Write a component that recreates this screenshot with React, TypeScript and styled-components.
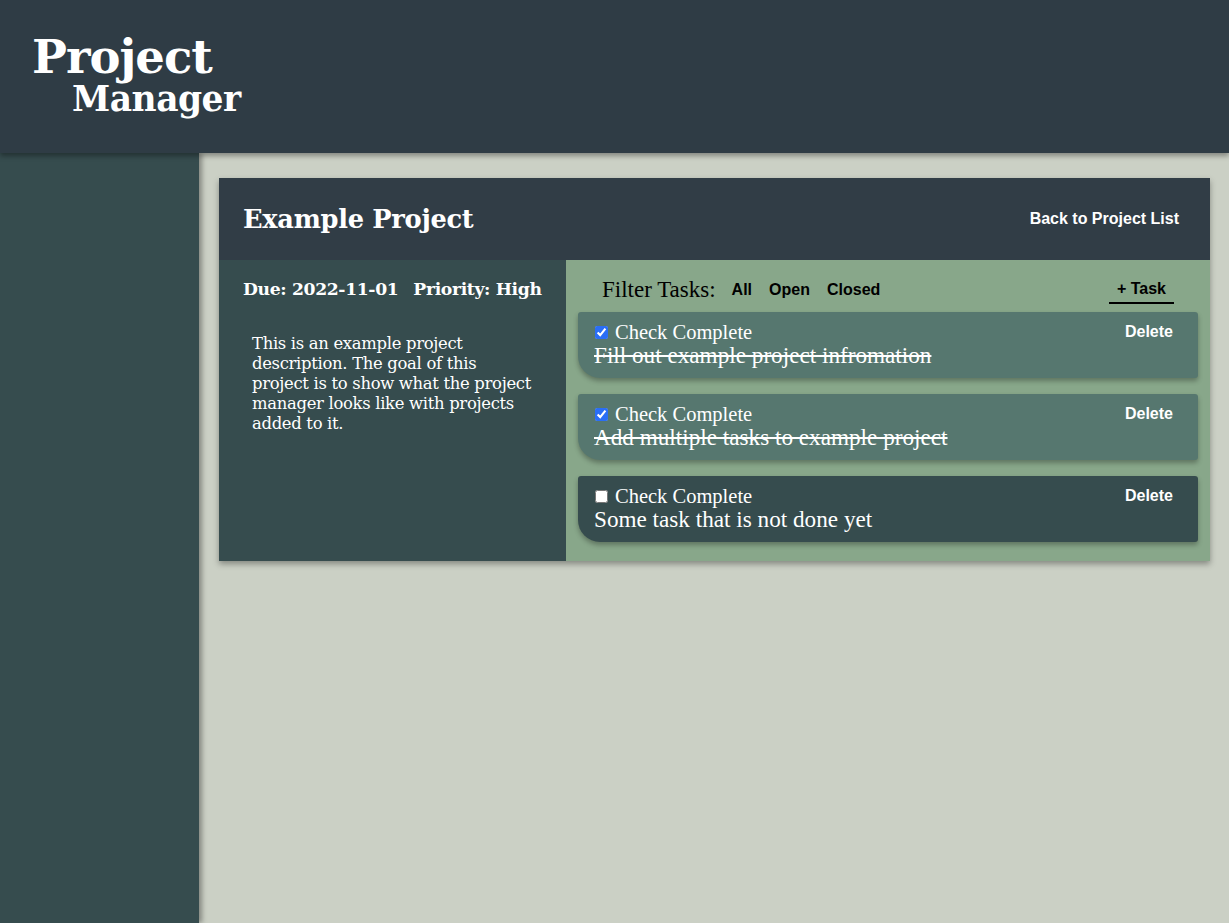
import React from "react";
import styled, { createGlobalStyle } from "styled-components";

const GlobalStyle = createGlobalStyle`
  html, body { margin: 0; padding: 0; }
  body {
    background: #cbd0c5;
    font-family: "DejaVu Serif", "Liberation Serif", serif;
    color: #ffffff;
  }
  * { box-sizing: border-box; }
`;

const Page = styled.div`
  display: grid;
  grid-template-columns: 199px 1fr;
  grid-template-rows: 153px 1fr;
  min-height: 100vh;
`;

const Header = styled.header`
  grid-column: 1 / 3;
  background: #2f3c45;
  box-shadow: 0 3px 5px rgba(0, 0, 0, 0.35);
  position: relative;
  z-index: 2;
  padding: 34px 0 0 32px;
`;

const Logo = styled.h1`
  margin: 0;
  display: flex;
  flex-direction: column;
  align-items: flex-start;
  font-family: "DejaVu Serif", serif;
  font-weight: 700;
  color: #ffffff;
  line-height: 1;
`;

const LogoTop = styled.span`
  font-size: 46.5px;
  letter-spacing: -1px;
`;

const LogoBottom = styled.span`
  font-size: 34.5px;
  margin-left: 40px;
  margin-top: 1px;
  letter-spacing: -0.5px;
`;

const Sidebar = styled.aside`
  background: #364c4e;
  box-shadow: 3px 0 5px rgba(0, 0, 0, 0.35);
  position: relative;
  z-index: 1;
`;

const Main = styled.main`
  padding: 25px 19px 0 20px;
`;

const Card = styled.section`
  box-shadow: 0 3px 6px rgba(0, 0, 0, 0.35);
`;

const CardHeader = styled.div`
  height: 82px;
  background: #313d46;
  display: flex;
  align-items: center;
  justify-content: space-between;
  padding: 0 31px 0 24px;
`;

const Title = styled.h2`
  margin: 0;
  font-family: "DejaVu Serif", serif;
  font-size: 25.7px;
  font-weight: 700;
  letter-spacing: -0.3px;
  color: #ffffff;
`;

const TextButton = styled.button<{ $dark?: boolean }>`
  background: none;
  border: none;
  padding: 0;
  cursor: pointer;
  font-family: "Liberation Sans", Arial, sans-serif;
  font-weight: 700;
  font-size: 16px;
  color: ${(p) => (p.$dark ? "#000000" : "#ffffff")};
`;

const CardBody = styled.div`
  display: grid;
  grid-template-columns: 347px 1fr;
`;

const Info = styled.div`
  background: #364c4e;
  padding: 19px 20px 20px 24px;
`;

const Meta = styled.div`
  display: flex;
  gap: 15px;
  font-family: "DejaVu Serif", serif;
  font-weight: 700;
  font-size: 17.2px;
  letter-spacing: -0.35px;
  white-space: nowrap;
`;

const Description = styled.p`
  margin: 35px 0 0 9px;
  max-width: 281px;
  font-family: "DejaVu Serif", serif;
  font-size: 16.4px;
  line-height: 20px;
  letter-spacing: -0.3px;
`;

const TasksPanel = styled.div`
  background: #88a78a;
  padding: 12px 12px 19px 12px;
  display: flex;
  flex-direction: column;
  gap: 16px;
`;

const FilterBar = styled.div`
  display: flex;
  align-items: center;
  padding: 0 24px;
  height: 36px;
  margin-bottom: -12px;
`;

const FilterLabel = styled.span`
  font-family: "Liberation Serif", serif;
  font-size: 23px;
  color: #000000;
  margin-right: 16px;
`;

const FilterButtons = styled.div`
  display: flex;
  gap: 17px;
  flex: 1;
`;

const AddTask = styled(TextButton)`
  border-bottom: 2px solid #000000;
  padding: 0 8px 4px 8px;
  margin-top: 4px;
`;

const Task = styled.div<{ $done: boolean }>`
  height: 66px;
  background: ${(p) => (p.$done ? "#56776f" : "#364c4e")};
  border-radius: 3px 3px 3px 22px;
  box-shadow: 0 3px 5px rgba(0, 0, 0, 0.3);
  padding: 9px 25px 0 17px;
  display: flex;
  flex-direction: column;
`;

const TaskTop = styled.div`
  display: flex;
  align-items: center;
  justify-content: space-between;
`;

const CheckLabel = styled.label`
  display: flex;
  align-items: center;
  gap: 7px;
  font-family: "Liberation Serif", serif;
  font-size: 20.5px;
  line-height: 22px;
`;

const Check = styled.input`
  margin: 0;
  width: 13px;
  height: 13px;
  accent-color: #2a6ef5;
`;

const TaskName = styled.div<{ $done: boolean }>`
  font-family: "Liberation Serif", serif;
  font-size: 23.2px;
  line-height: 24px;
  margin-left: -1px;
  text-decoration: ${(p) => (p.$done ? "line-through" : "none")};
`;

const tasks = [
  { name: "Fill out example project infromation", done: true },
  { name: "Add multiple tasks to example project", done: true },
  { name: "Some task that is not done yet", done: false },
];

export default function App() {
  return (
    <>
      <GlobalStyle />
      <Page>
        <Header>
          <Logo>
            <LogoTop>Project</LogoTop>
            <LogoBottom>Manager</LogoBottom>
          </Logo>
        </Header>
        <Sidebar />
        <Main>
          <Card>
            <CardHeader>
              <Title>Example Project</Title>
              <TextButton>Back to Project List</TextButton>
            </CardHeader>
            <CardBody>
              <Info>
                <Meta>
                  <span>Due: 2022-11-01</span>
                  <span>Priority: High</span>
                </Meta>
                <Description>
                  This is an example project description. The goal of this
                  project is to show what the project manager looks like with
                  projects added to it.
                </Description>
              </Info>
              <TasksPanel>
                <FilterBar>
                  <FilterLabel>Filter Tasks:</FilterLabel>
                  <FilterButtons>
                    <TextButton $dark>All</TextButton>
                    <TextButton $dark>Open</TextButton>
                    <TextButton $dark>Closed</TextButton>
                  </FilterButtons>
                  <AddTask $dark>+ Task</AddTask>
                </FilterBar>
                {tasks.map((t) => (
                  <Task key={t.name} $done={t.done}>
                    <TaskTop>
                      <CheckLabel>
                        <Check type="checkbox" defaultChecked={t.done} />
                        Check Complete
                      </CheckLabel>
                      <TextButton>Delete</TextButton>
                    </TaskTop>
                    <TaskName $done={t.done}>{t.name}</TaskName>
                  </Task>
                ))}
              </TasksPanel>
            </CardBody>
          </Card>
        </Main>
      </Page>
    </>
  );
}
